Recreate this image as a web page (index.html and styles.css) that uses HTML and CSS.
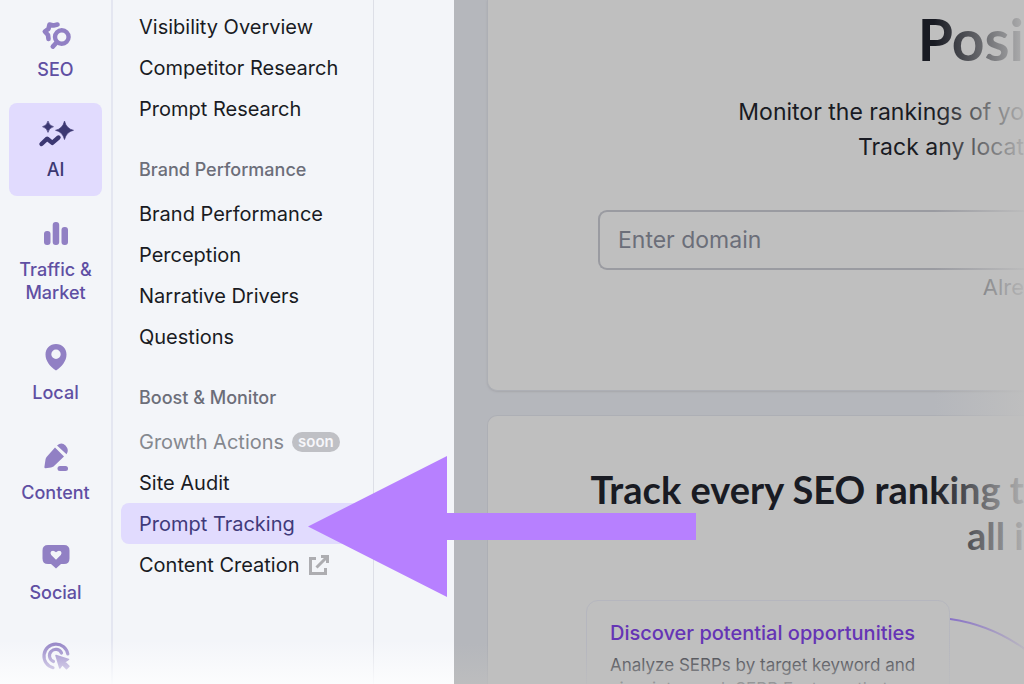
FILE: index.html
```html
<!DOCTYPE html>
<html lang="en">
<head>
<meta charset="utf-8">
<title>Prompt Tracking</title>
<link rel="stylesheet" href="styles.css">
</head>
<body>
<div class="app">
  <nav class="rail" aria-label="Toolkits">
    <a class="rail-item" href="#seo">
      <svg class="rail-icon" viewBox="0 0 32 32" fill="none" stroke="currentColor" stroke-linecap="round" stroke-linejoin="round"><path d="M17.500 6.500 13.500 7.500 9.500 6.500 8.500 10.800 4.800 13.500 8 17 8.500 21" stroke-width="4.600"/><circle cx="21.800" cy="19" r="6.800" stroke-width="4.400"/><path d="M16.800 24.300 12.800 28.600" stroke-width="4.600"/></svg>
      <span>SEO</span>
    </a>
    <a class="rail-item rail-item-active" href="#ai" aria-current="page">
      <svg class="rail-icon rail-icon-wide" viewBox="0 0 36 32" fill="currentColor"><path d="M10 3Q11 7.700 15.500 8.700 11 9.700 10 14.400 9 9.700 4.500 8.700 9 7.700 10 3ZM26.500 3Q28.500 10.800 35.500 12.300 28.500 13.800 26.500 21.600 24.500 13.800 17.500 12.300 24.500 10.800 26.500 3Z" stroke="currentColor" stroke-width=".6"/><path d="M3.500 26 9.200 20.700 14.300 24.900 20.500 19.500" fill="none" stroke="currentColor" stroke-width="4.400" stroke-linecap="round" stroke-linejoin="round"/></svg>
      <span>AI</span>
    </a>
    <a class="rail-item" href="#traffic">
      <svg class="rail-icon" viewBox="0 0 32 32" fill="currentColor"><rect x="4" y="13" width="6.500" height="14" rx="3"/><rect x="12.700" y="4" width="6.500" height="23" rx="3"/><rect x="21.500" y="9" width="6.500" height="18" rx="3"/></svg>
      <span>Traffic &amp;<br>Market</span>
    </a>
    <a class="rail-item" href="#local">
      <svg class="rail-icon" viewBox="0 0 32 32" fill="currentColor"><path fill-rule="evenodd" d="M16 3C9.900 3 5.500 7.500 5.500 13.500 5.500 20 10 25.500 16 29.500 22 25.500 26.500 20 26.500 13.500 26.500 7.500 22.100 3 16 3ZM16 8.500A4.700 4.700 0 1 1 16 17.900 4.700 4.700 0 0 1 16 8.500Z"/></svg>
      <span>Local</span>
    </a>
    <a class="rail-item" href="#content">
      <svg class="rail-icon" viewBox="0 0 32 32" fill="currentColor"><path d="M15 6.500 24 15.500 13.500 25.500Q12.500 26.200 11 26.500L5.500 27.300Q4.200 27.300 4.400 26L5.500 18.500Q5.800 17 6.800 15.800ZM17 4.500Q21.500 .5 25.500 4.500 29.500 9 26.500 13.300Z"/><rect x="17.500" y="25" width="10.500" height="5" rx="2.500"/></svg>
      <span>Content</span>
    </a>
    <a class="rail-item" href="#social">
      <svg class="rail-icon" viewBox="0 0 32 32" fill="currentColor"><path fill-rule="evenodd" d="M8 4H24Q29.500 4 29.500 9.500V17.500Q29.500 23 24 23H21L16 27.500 11 23H8Q2.500 23 2.500 17.500V9.500Q2.500 4 8 4ZM16 18.800 20.800 14Q22.300 12 20.800 10.300 18.500 8.600 16 11.300 13.500 8.600 11.200 10.300 9.700 12 11.200 14Z"/></svg>
      <span>Social</span>
    </a>
    <a class="rail-item" href="#advertising" aria-label="Advertising">
      <svg class="rail-icon" viewBox="0 0 32 32" fill="none" stroke="currentColor" stroke-width="3.200" stroke-linecap="round"><path d="M13 26.700A12 12 0 1 1 27.800 13"/><path d="M13.500 20.500A6.300 6.300 0 1 1 21.500 12"/><path d="M16 14.500 28.500 18.500 24.800 21 29 25.200 26.500 27.800 22.300 23.500 19.800 27Z" fill="currentColor" stroke-width="1.500" stroke-linejoin="round"/></svg>
    </a>
  </nav>

  <nav class="submenu" aria-label="AI tools">
    <a class="menu-link" href="#visibility">Visibility Overview</a>
    <a class="menu-link" href="#competitors">Competitor Research</a>
    <a class="menu-link" href="#prompts">Prompt Research</a>
    <h2 class="menu-heading">Brand Performance</h2>
    <a class="menu-link" href="#brand">Brand Performance</a>
    <a class="menu-link" href="#perception">Perception</a>
    <a class="menu-link" href="#drivers">Narrative Drivers</a>
    <a class="menu-link" href="#questions">Questions</a>
    <h2 class="menu-heading">Boost &amp; Monitor</h2>
    <a class="menu-link menu-link-soon" href="#growth">Growth Actions <span class="badge">soon</span></a>
    <a class="menu-link" href="#audit">Site Audit</a>
    <a class="menu-link menu-link-active" href="#tracking">Prompt Tracking</a>
    <a class="menu-link" href="#creation">Content Creation
      <svg class="external" viewBox="0 0 22 22" fill="none" stroke="currentColor" stroke-width="3"><path d="M8 4.500H2.500V19.500H17.500V14M13 2.500H19.500V9M19 3 8.500 13.500"/></svg>
    </a>
  </nav>

  <div class="gutter"></div>

  <main class="content">
    <section class="card hero">
      <h1 class="hero-title">Posi</h1>
      <p class="hero-text">Monitor the rankings of yo<br>Track any locat</p>
      <input class="domain" type="text" placeholder="Enter domain" aria-label="Enter domain">
      <p class="hero-note">Alre</p>
    </section>
    <section class="card features">
      <h2 class="features-title">Track every SEO ranking t<br>all i</h2>
      <div class="feature-row">
        <article class="feature">
          <h3 class="feature-title">Discover potential opportunities</h3>
          <p class="feature-text">Analyze SERPs by target keyword and view intraweek SERP Features that</p>
        </article>
        <svg class="connector" viewBox="0 0 76 66" fill="none"><path d="M0 1Q42 7 76 32" stroke="#7d62c8" stroke-width="2"/></svg>
      </div>
    </section>
  </main>

  <svg class="arrow" viewBox="0 0 388 142" aria-hidden="true"><path d="M0 70.500 139 0V57H388V84H139V141Z" fill="#b780ff"/></svg>
</div>
</body>
</html>
```
FILE: styles.css
```css
* { box-sizing: border-box; }

body {
  margin: 0;
  font-family: Inter, "Liberation Sans", sans-serif;
  color: #191b23;
  background: #f3f5f9;
}

h1, h2, h3, p { margin: 0; }
a { color: inherit; text-decoration: none; }

.app {
  position: relative;
  display: grid;
  grid-template-columns: 113px 261px 80px minmax(0, 1fr);
  height: 100vh;
  overflow: hidden;
}

.app::after {
  content: "";
  position: absolute;
  left: 0;
  bottom: 0;
  width: 454px;
  height: 44px;
  background: linear-gradient(rgba(253, 253, 254, 0), rgba(253, 253, 254, 0.9));
}

.rail {
  display: flex;
  flex-direction: column;
  gap: 7px;
  padding: 3px 9px 0;
  border-right: 2px solid #e4e6f1;
}

.rail-item {
  display: flex;
  flex: none;
  flex-direction: column;
  align-items: center;
  gap: 8px;
  padding: 15px 0;
  border-radius: 8px;
  color: #5f4fa3;
  font-size: 18px;
  font-weight: 500;
  line-height: 23px;
  text-align: center;
}

.rail-item-active { background: #e1dbfe; color: #3c3872; }
.rail-icon { width: 32px; height: 32px; color: #9180c4; }
.rail-icon-wide { width: 36px; }
.rail-item-active .rail-icon { color: #3c3872; }

.submenu {
  display: flex;
  flex-direction: column;
  padding: 6px 8px 0;
  border-right: 1px solid #dddfe7;
}

.menu-link {
  display: flex;
  align-items: center;
  gap: 8px;
  height: 41px;
  padding: 0 18px;
  border-radius: 8px;
  font-size: 20px;
  white-space: nowrap;
}

.menu-link-active { background: #e1dbfe; color: #3f3a7a; }
.menu-link-soon { color: #85888f; }

.menu-heading {
  padding: 29px 18px 11px;
  color: #6c6e79;
  font-size: 18px;
  font-weight: 500;
  line-height: 24px;
}

.badge {
  padding: 0 6px;
  border-radius: 10px;
  background: #bfc0c5;
  color: #f6f6fa;
  font-size: 15px;
  font-weight: 600;
  line-height: 20px;
}

.external { width: 22px; height: 22px; color: #adadb1; }

.content {
  position: relative;
  display: flex;
  flex-direction: column;
  gap: 24px;
  padding-left: 33px;
  overflow: hidden;
  background: #b5b7bc;
}

.content::before,
.content::after {
  content: "";
  position: absolute;
  z-index: 1;
  right: 0;
  bottom: 0;
  pointer-events: none;
}

.content::before {
  top: 0;
  width: 90px;
  background: linear-gradient(90deg, rgba(191, 191, 191, 0), rgba(191, 191, 191, 0.9));
}

.content::after {
  left: 0;
  height: 44px;
  background: linear-gradient(rgba(191, 191, 191, 0), rgba(191, 191, 191, 0.8));
}

.card {
  flex: none;
  border: 1px solid #adafb5;
  border-right: 0;
  background: #bfbfbf;
}

.hero {
  padding: 7px 0 86px 110px;
  border-top: 0;
  border-radius: 0 0 0 10px;
  box-shadow: 0 1px 2px #a6a7ac;
}

.hero-title {
  font-family: Lato, sans-serif;
  font-size: 57px;
  line-height: 64px;
  text-align: right;
}

.hero-text {
  margin: 24px 0 45px;
  font-size: 23px;
  line-height: 35px;
  text-align: right;
  white-space: nowrap;
}

.domain {
  display: block;
  width: 100%;
  height: 60px;
  padding: 0 18px;
  border: 2px solid #9a9ba1;
  border-right: 0;
  border-radius: 9px 0 0 9px;
  background: transparent;
  font: inherit;
  font-size: 23px;
}

.domain::placeholder { color: #6b6e79; opacity: 1; }

.hero-note {
  color: #54565c;
  font-size: 22px;
  line-height: 34px;
  text-align: right;
}

.features {
  border-bottom: 0;
  border-radius: 10px 0 0 0;
  padding: 50px 0 0 98px;
}

.features-title {
  font-family: Lato, sans-serif;
  font-size: 38px;
  line-height: 46px;
  text-align: right;
  white-space: nowrap;
}

.feature-row {
  display: flex;
  align-items: flex-start;
  margin-top: 42px;
}

.feature {
  flex: none;
  width: 364px;
  padding: 18px 20px 24px 23px;
  border: 1px solid #b5b6be;
  border-radius: 12px;
}

.feature-title {
  color: #6534b5;
  font-size: 20px;
  font-weight: 500;
  line-height: 28px;
  white-space: nowrap;
}

.feature-text {
  margin-top: 6px;
  color: #35373f;
  font-size: 17px;
  line-height: 24px;
}

.connector { flex: none; width: 76px; height: 66px; margin-top: 18px; }

.arrow {
  position: absolute;
  z-index: 2;
  top: 456px;
  left: 308px;
  width: 388px;
  height: 142px;
}
```
